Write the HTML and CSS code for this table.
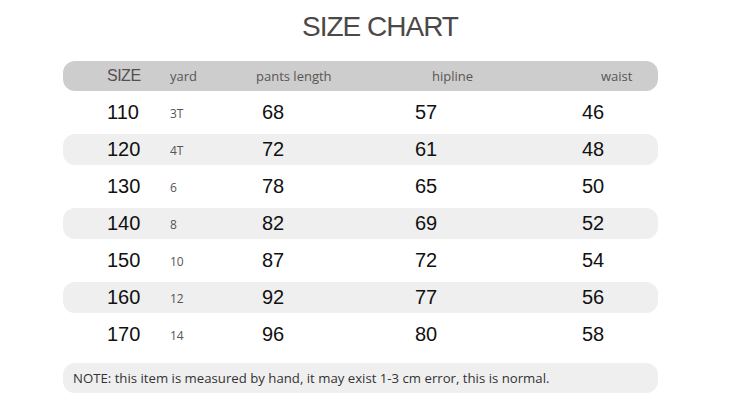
FILE: index.html
```html
<!DOCTYPE html>
<html>
<head>
<meta charset="utf-8">
<link rel="stylesheet" href="styles.css">
</head>
<body>
<div class="page">
  <h1 class="title">SIZE CHART</h1>
  <div class="chart">
    <div class="row head">
      <span class="c-size">SIZE</span>
      <span class="c-yard">yard</span>
      <span class="c-pants">pants length</span>
      <span class="c-hip">hipline</span>
      <span class="c-waist">waist</span>
    </div>
    <div class="row"><span class="num">110</span><span class="yard">3T</span><span class="num">68</span><span class="num">57</span><span class="num">46</span></div>
    <div class="row alt"><span class="num">120</span><span class="yard">4T</span><span class="num">72</span><span class="num">61</span><span class="num">48</span></div>
    <div class="row"><span class="num">130</span><span class="yard">6</span><span class="num">78</span><span class="num">65</span><span class="num">50</span></div>
    <div class="row alt"><span class="num">140</span><span class="yard">8</span><span class="num">82</span><span class="num">69</span><span class="num">52</span></div>
    <div class="row"><span class="num">150</span><span class="yard">10</span><span class="num">87</span><span class="num">72</span><span class="num">54</span></div>
    <div class="row alt"><span class="num">160</span><span class="yard">12</span><span class="num">92</span><span class="num">77</span><span class="num">56</span></div>
    <div class="row"><span class="num">170</span><span class="yard">14</span><span class="num">96</span><span class="num">80</span><span class="num">58</span></div>
    <div class="note">NOTE: this item is measured by hand, it may exist 1-3 cm error, this is normal.</div>
  </div>
</div>
</body>
</html>
```
FILE: styles.css
```css
html, body {
  margin: 0;
  padding: 0;
  background: #ffffff;
}
body {
  font-family: "Liberation Sans", Arial, sans-serif;
  width: 750px;
  height: 403px;
  overflow: hidden;
}
.page {
  display: flex;
  flex-direction: column;
  align-items: flex-start;
}
.title {
  margin: 11px 0 0 302px;
  font-size: 28px;
  font-weight: normal;
  letter-spacing: -1px;
  color: #4d4848;
  line-height: 32px;
  height: 32px;
}
.chart {
  margin: 18px 0 0 63px;
  width: 595px;
  display: flex;
  flex-direction: column;
  gap: 6px;
}
.row {
  display: grid;
  grid-template-columns: 63px 92px 153px 167px 1fr;
  align-items: center;
  padding-left: 44px;
  height: 31px;
  border-radius: 12px;
}
.row.alt {
  background: #efefef;
}
.row.head {
  background: #cdcdcd;
  height: 30px;
  color: #5a5555;
  font-family: "Open Sans", "Liberation Sans", sans-serif;
  font-size: 13px;
}
.head .c-size {
  font-family: "Liberation Sans", Arial, sans-serif;
  font-size: 16px;
  letter-spacing: -0.5px;
  color: #555050;
}
.head .c-yard { margin-left: 0; }
.head .c-pants { margin-left: -6px; }
.head .c-hip { margin-left: 17px; }
.head .c-waist { margin-left: 19px; }
.num {
  font-size: 20px;
  color: #111111;
}
.yard {
  font-family: "Open Sans", "Liberation Sans", sans-serif;
  font-size: 12px;
  color: #555555;
  margin-top: 2px;
}
.note {
  margin-top: 7px;
  height: 30px;
  border-radius: 12px;
  background: #efefef;
  display: flex;
  align-items: center;
  padding-left: 10px;
  font-family: "Open Sans", "Liberation Sans", sans-serif;
  font-size: 13.2px;
  color: #333333;
}
```
